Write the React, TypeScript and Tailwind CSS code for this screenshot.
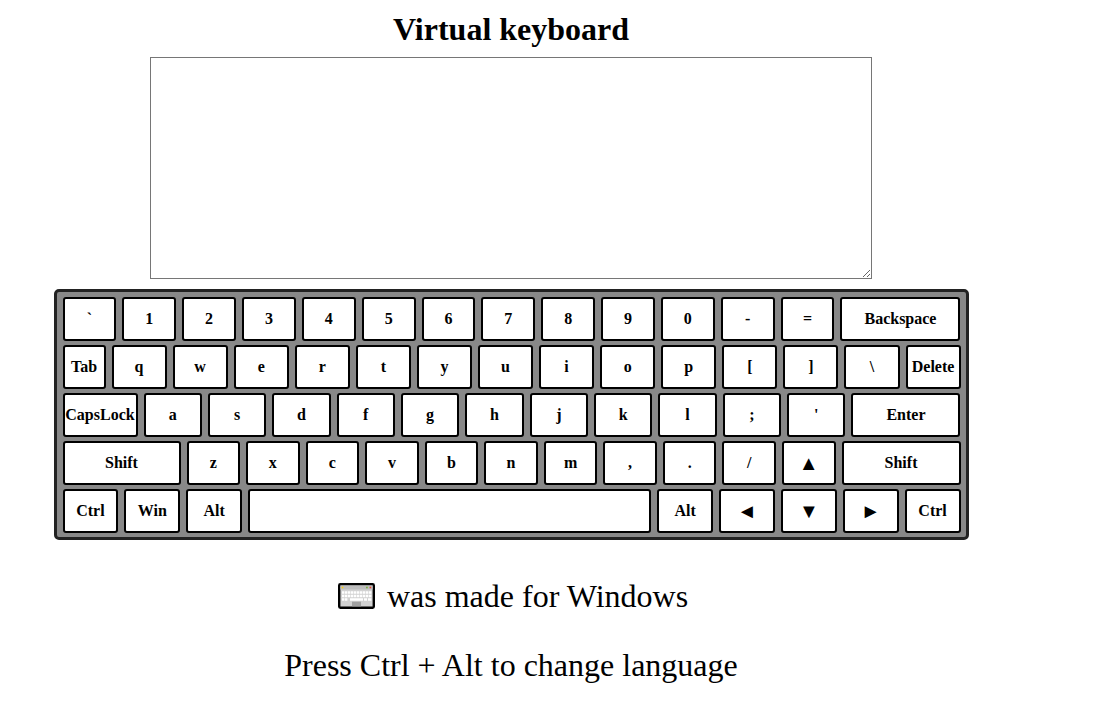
type Key = { label: string; size?: string; name?: string };

const chars = (s: string): Key[] => s.split("").map((label) => ({ label }));

const rows: Key[][] = [
  [...chars("`1234567890-="), { label: "Backspace", size: "w-[120px]" }],
  [{ label: "Tab", size: "w-[43px]" }, ...chars("qwertyuiop[]\\"), { label: "Delete" }],
  [
    { label: "CapsLock", size: "w-[75px]" },
    ...chars("asdfghjkl;'"),
    { label: "Enter", size: "w-[109px]" },
  ],
  [
    { label: "Shift", size: "w-[118px]" },
    ...chars("zxcvbnm,./"),
    { label: "▲", name: "Up" },
    { label: "Shift", size: "w-[119px]" },
  ],
  [
    { label: "Ctrl" },
    { label: "Win" },
    { label: "Alt" },
    { label: "", name: "Space", size: "w-[403px]" },
    { label: "Alt" },
    { label: "◄", name: "Left" },
    { label: "▼", name: "Down" },
    { label: "►", name: "Right" },
    { label: "Ctrl" },
  ],
];

const arrows = "▲◄▼►";

function KeyButton({ label, size, name }: Key) {
  const isArrow = label !== "" && arrows.includes(label);
  return (
    <button
      type="button"
      aria-label={name}
      className={`${size ?? "min-w-0 flex-1"} ${isArrow ? "text-xl" : "text-base"} h-11 rounded-[3px] border-2 border-black bg-white leading-5 font-bold whitespace-nowrap`}
    >
      {label}
    </button>
  );
}

function KeyboardIcon() {
  return (
    <svg width="37" height="26" viewBox="0 0 37 26" className="mr-3 ml-1 inline-block align-[-2px]" aria-hidden="true">
      <rect x="1.2" y="1.2" width="34.6" height="23.6" rx="1.2" fill="#d2d2d2" stroke="#000" strokeWidth="2.4" />
      <rect x="2.4" y="2.4" width="32.2" height="4.1" fill="#bdbdbd" />
      <rect x="3.7" y="3.7" width="1.6" height="1.6" fill="#ffd000" />
      <rect x="28" y="3.7" width="1.8" height="1.6" fill="#7cb342" />
      <rect x="31.6" y="3.7" width="1.6" height="1.6" fill="#f0452c" />
      <path d="M4 9.5H33.4M4 13H33.4M4 16.5H10" stroke="#fff" strokeWidth="2.6" strokeDasharray="2.4 0.6" />
      <path d="M12 16.5H25M26 16.5H29M30 16.5H33.4" stroke="#fff" strokeWidth="2.6" />
      <rect x="14" y="18.7" width="9" height="4.6" fill="#a0a0a0" />
    </svg>
  );
}

export default function App() {
  return (
    <main className="flex w-full max-w-[1022px] flex-col items-center bg-white pt-[11px] font-['Liberation_Serif',serif] text-black">
      <h1 className="text-[32px] leading-9 font-bold">
        <label htmlFor="output">Virtual keyboard</label>
      </h1>
      <textarea
        id="output"
        className="mt-[10px] block h-[222px] w-full max-w-[722px] resize border border-[#767676] bg-white p-[2px]"
      />
      <div className="mt-[10px] flex w-full max-w-[915px] flex-col gap-1 rounded-[5px] border-3 border-[#222] bg-[#888] pt-[5px] pr-[5px] pb-1 pl-[6px]">
        {rows.map((row, i) => (
          <div key={i} className="flex gap-[6px]">
            {row.map((key, j) => (
              <KeyButton key={j} {...key} />
            ))}
          </div>
        ))}
      </div>
      <p className="mt-[38px] text-[32px] leading-[37px]">
        <KeyboardIcon />
        was made for Windows
      </p>
      <p className="mt-8 text-[32px] leading-[37px]">Press Ctrl + Alt to change language</p>
    </main>
  );
}
